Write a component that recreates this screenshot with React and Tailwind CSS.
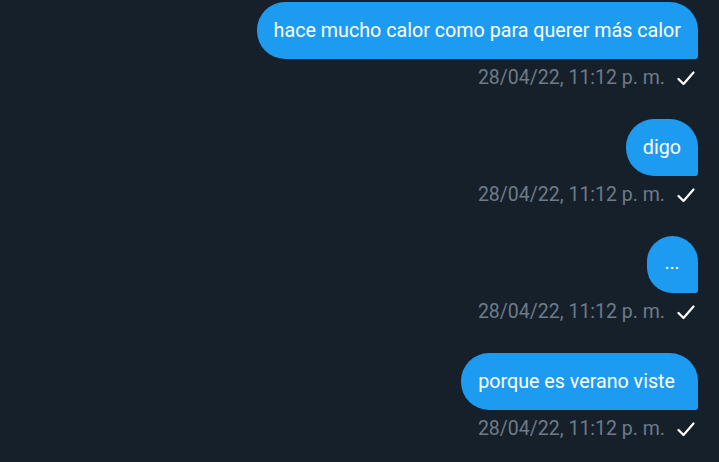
import React from 'react';

const messages = [
  { id: 1, text: 'hace mucho calor como para querer más calor', time: '28/04/22, 11:12 p. m.' },
  { id: 2, text: 'digo', time: '28/04/22, 11:12 p. m.' },
  { id: 3, text: '...', time: '28/04/22, 11:12 p. m.', small: true },
  { id: 4, text: 'porque es verano viste', time: '28/04/22, 11:12 p. m.', trailing: true },
];

const Check = () => (
  <svg width="18" height="15" viewBox="0 0 18 15" fill="none" className="shrink-0">
    <polyline points="1.5,8 6.5,13 16.5,1.5" stroke="#ffffff" strokeWidth="2.2" strokeLinecap="round" strokeLinejoin="round" />
  </svg>
);

const App = () => {
  return (
    <div
      className="min-h-screen w-full bg-[#15202b] pt-[2px] pr-[21px]"
      style={{ fontFamily: 'Roboto, "Noto Sans", sans-serif' }}
    >
      <div className="flex flex-col items-end">
        {messages.map((m) => (
          <div key={m.id} className="mb-[28px] flex flex-col items-end">
            {/* Bubble */}
            <div
              className={`flex h-[57px] items-center rounded-[28px] rounded-br-[3px] bg-[#1d9bf0] pl-[17px] text-white ${
                m.trailing ? 'pr-[23px]' : 'pr-[17px]'
              } ${m.small ? 'min-w-[51px] justify-center text-[14px] font-bold tracking-[1px]' : 'text-[19.7px]'}`}
            >
              {m.text}
            </div>
            {/* Timestamp */}
            <div className="mt-[6px] flex h-[26px] items-center gap-[12px] pr-[3px]">
              <span className="text-[19.5px] text-[#6e7b88]">{m.time}</span>
              <Check />
            </div>
          </div>
        ))}
      </div>
    </div>
  );
};

export default App;
